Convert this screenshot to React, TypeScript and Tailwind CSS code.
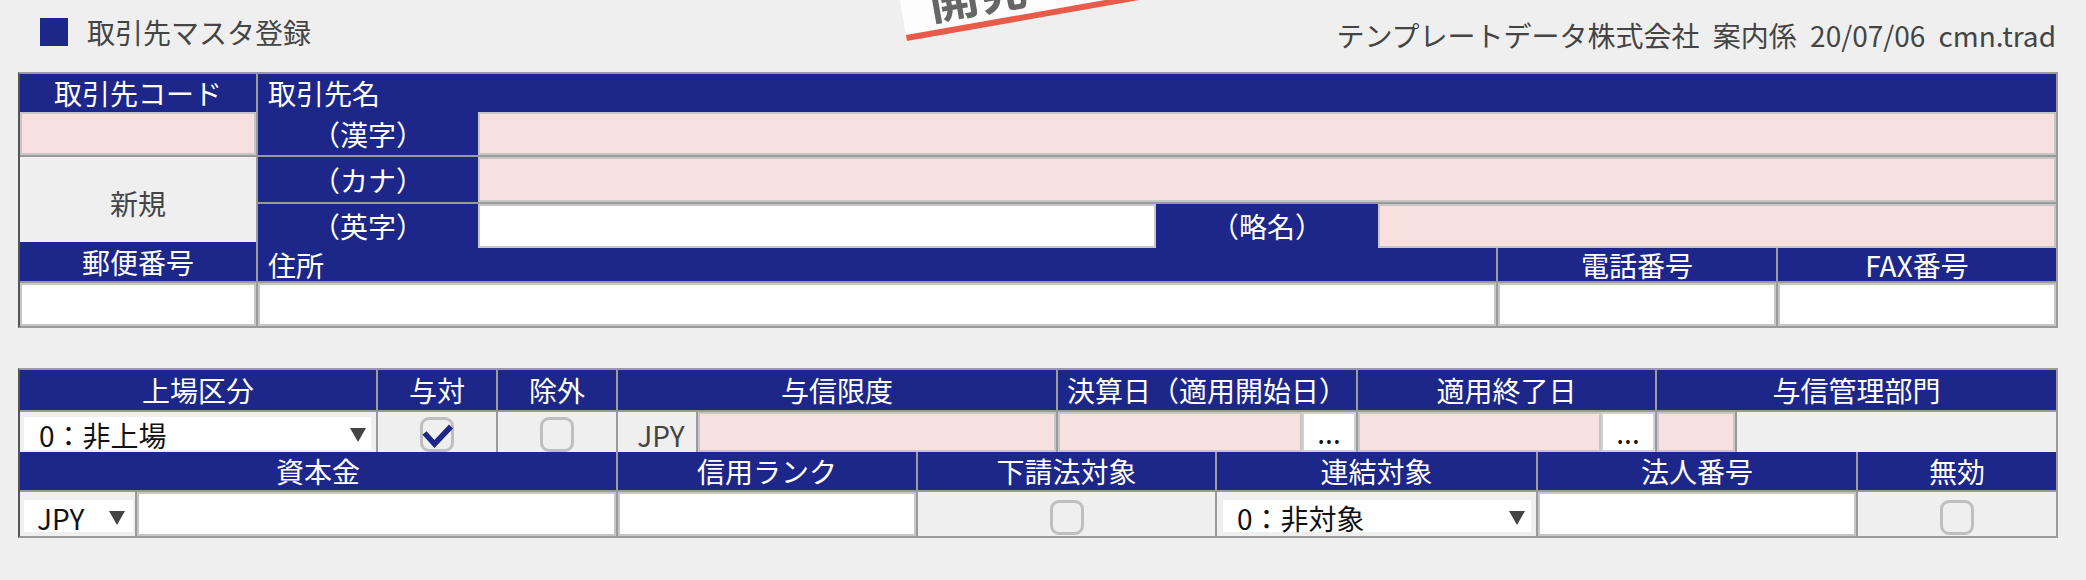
import type { ReactNode } from 'react'

const NAVY = 'bg-[#1d2689]'

function Hd({ children, className = '' }: { children?: ReactNode; className?: string }) {
  return (
    <div className={`flex items-center justify-center bg-[#1d2689] text-white ${className}`}>
      {children}
    </div>
  )
}

function Field({ pink, className = '' }: { pink?: boolean; className?: string }) {
  return (
    <div
      className={`border-2 border-[#c6c6c6] ${pink ? 'bg-[#f8e0e0]' : 'bg-white'} ${className}`}
    />
  )
}

function Arrow() {
  return (
    <svg width="16" height="14" viewBox="0 0 16 14" className="shrink-0">
      <path d="M0 0 H16 L8 14 Z" fill="#444" />
    </svg>
  )
}

function Select({ label, className = '' }: { label: string; className?: string }) {
  return (
    <div className={`flex h-full items-center justify-between bg-white pt-[3px] text-[#111] ${className}`}>
      <span>{label}</span>
      <Arrow />
    </div>
  )
}

function Check({ checked }: { checked?: boolean }) {
  return (
    <div className="relative h-[35px] w-[34px] rounded-[9px] border-[3px] border-[#bfbfbf] bg-[#efefef]">
      {checked && (
        <svg
          width="34"
          height="35"
          viewBox="0 0 34 35"
          className="absolute left-[-3px] top-[-3px] overflow-visible"
        >
          <path d="M4.5 16 L14.5 27 L31 9.5" fill="none" stroke="#1d2689" strokeWidth="5.5" />
        </svg>
      )}
    </div>
  )
}

function DotsButton() {
  return (
    <div className="flex w-[54px] items-end justify-center border-2 border-[#d0d0d0] bg-white pb-[4px] text-[#111]">
      ...
    </div>
  )
}

export default function App() {
  return (
    <div className="relative min-h-[580px] w-full overflow-hidden bg-[#efefef] font-['Noto_Sans_CJK_JP','Noto_Sans',sans-serif] text-[28px] leading-none text-[#444]">
      {/* dev stamp */}
      <div className="absolute left-[907px] top-[-59px] h-[100px] w-[300px] origin-bottom-left rotate-[-10deg] border-b-[6px] border-[#e85b4b] bg-[#fdfdfd]">
        <span className="absolute bottom-[7px] left-[28px] text-[50px] font-bold text-[#666]">開発</span>
      </div>

      {/* page header */}
      <div className="flex h-[72px] items-start justify-between pl-[40px] pr-[30px] pt-[18px]">
        <div className="flex items-center gap-[19px]">
          <div className={`h-[28px] w-[28px] ${NAVY}`} />
          <span>取引先マスタ登録</span>
        </div>
        <span className="pt-[3px] [word-spacing:7px]">テンプレートデータ株式会社 案内係 20/07/06 cmn.trad</span>
      </div>

      {/* 取引先 */}
      <div className="ml-[18px] flex w-[2040px] gap-x-[2px] border-2 border-[#9a9a9a] border-l-[#555] bg-[#9a9a9a]">
        <div className="flex w-[236px] flex-col">
          <Hd className="h-[38px]">取引先コード</Hd>
          <Field pink className="h-[43px]" />
          <div className="h-[2px]" />
          <div className="flex h-[85px] items-center justify-center bg-[#efefef] pt-[6px]">新規</div>
          <Hd className="h-[39px]">郵便番号</Hd>
          <div className="h-[2px]" />
          <Field className="h-[43px]" />
        </div>

        <div className={`flex flex-1 flex-col ${NAVY} text-white`}>
          <div className="flex h-[38px] items-center pl-[10px]">取引先名</div>
          <div className="flex h-[43px]">
            <Hd className="w-[220px]">（漢字）</Hd>
            <Field pink className="flex-1" />
          </div>
          <div className="h-[2px] bg-[#9a9a9a]" />
          <div className="flex h-[45px]">
            <Hd className="w-[220px]">（カナ）</Hd>
            <Field pink className="flex-1" />
          </div>
          <div className="h-[2px] bg-[#9a9a9a]" />
          <div className="flex h-[44px]">
            <Hd className="w-[220px]">（英字）</Hd>
            <Field className="w-[678px]" />
            <Hd className="w-[222px]">（略名）</Hd>
            <Field pink className="flex-1" />
          </div>
          <div className="flex h-[33px] gap-x-[2px] bg-[#9a9a9a]">
            <div className={`flex w-[1238px] items-center pl-[10px] ${NAVY}`}>住所</div>
            <Hd className="w-[278px]">電話番号</Hd>
            <Hd className="flex-1">FAX番号</Hd>
          </div>
          <div className="h-[2px] bg-[#9a9a9a]" />
          <div className="flex h-[43px] gap-x-[2px] bg-[#9a9a9a]">
            <Field className="w-[1238px]" />
            <Field className="w-[278px]" />
            <Field className="flex-1" />
          </div>
        </div>
      </div>

      {/* 与信 */}
      <div className="ml-[18px] mt-[40px] flex w-[2040px] flex-col border-2 border-[#9a9a9a] border-l-[#555] bg-[#9a9a9a]">
        <div className="grid grid-cols-[356px_118px_118px_438px_298px_297px_399px] grid-rows-[40px_40px] gap-x-[2px] gap-y-[2px]">
          <Hd>上場区分</Hd>
          <Hd>与対</Hd>
          <Hd>除外</Hd>
          <Hd>与信限度</Hd>
          <Hd>決算日（適用開始日）</Hd>
          <Hd>適用終了日</Hd>
          <Hd>与信管理部門</Hd>

          <div className="bg-[#efefef] pb-[2px] pl-[4px] pr-[5px] pt-[5px]">
            <Select label="0：非上場" className="pl-[15px] pr-[5px]" />
          </div>
          <div className="flex items-end justify-center bg-[#efefef]">
            <Check checked />
          </div>
          <div className="flex items-end justify-center bg-[#efefef]">
            <Check />
          </div>
          <div className="flex gap-x-[2px]">
            <div className="flex w-[78px] items-center justify-center bg-[#efefef] pl-[8px] pt-[6px]">JPY</div>
            <Field pink className="flex-1" />
          </div>
          <div className="flex">
            <Field pink className="flex-1" />
            <DotsButton />
          </div>
          <div className="flex">
            <Field pink className="flex-1" />
            <DotsButton />
          </div>
          <div className="flex gap-x-[2px]">
            <Field pink className="w-[78px]" />
            <div className="flex-1 bg-[#efefef]" />
          </div>
        </div>

        <div className="grid grid-cols-[596px_298px_297px_319px_318px_198px] grid-rows-[38px_44px] gap-x-[2px] gap-y-[2px]">
          <Hd>資本金</Hd>
          <Hd>信用ランク</Hd>
          <Hd>下請法対象</Hd>
          <Hd>連結対象</Hd>
          <Hd>法人番号</Hd>
          <Hd>無効</Hd>

          <div className="flex gap-x-[2px]">
            <div className="w-[115px] bg-[#efefef] pb-[4px] pl-[4px] pr-[2px] pt-[8px]">
              <Select label="JPY" className="pl-[13px] pr-[8px]" />
            </div>
            <Field className="flex-1" />
          </div>
          <Field />
          <div className="flex items-center justify-center bg-[#efefef] pt-[6px]">
            <Check />
          </div>
          <div className="bg-[#efefef] pb-[4px] pl-[6px] pr-[5px] pt-[8px]">
            <Select label="0：非対象" className="pl-[14px] pr-[6px]" />
          </div>
          <Field />
          <div className="flex items-center justify-center bg-[#efefef] pt-[6px]">
            <Check />
          </div>
        </div>
      </div>
    </div>
  )
}
